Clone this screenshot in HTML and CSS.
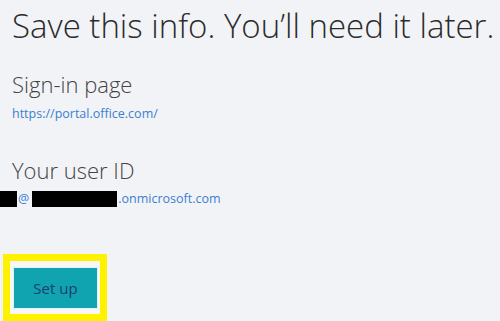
FILE: index.html
```html
<!DOCTYPE html>
<html>
<head>
  <title>Save this info</title>
  <link rel="stylesheet" href="styles.css">
</head>
<body>
  <div class="container">
    <h1>Save this info. You’ll need it later.</h1>

    <div class="info">
      <h2>Sign-in page</h2>
      <a class="link" href="#">https://portal.office.com/</a>
    </div>

    <div class="info">
      <h2>Your user ID</h2>
      <div class="user-id">
        <span class="redact redact-short"></span><span class="link">@</span><span class="redact redact-long"></span><span class="link">.onmicrosoft.com</span>
      </div>
    </div>

    <div class="highlight">
      <button class="setup">Set up</button>
    </div>
  </div>
</body>
</html>
```

FILE: styles.css
```css
body {
  margin: 0;
  background-color: #f2f3f6;
  font-family: "Open Sans", sans-serif;
  color: #333;
}

.container {
  display: flex;
  flex-direction: column;
  align-items: flex-start;
  padding: 4px 0 0 12px;
  height: 317px;
  overflow: hidden;
}

h1 {
  margin: 0;
  font-size: 33px;
  font-weight: 300;
  line-height: 44px;
  color: #2b2b2b;
  white-space: nowrap;
}

.info {
  display: flex;
  flex-direction: column;
  align-items: flex-start;
  margin-top: 21px;
}

.info + .info {
  margin-top: 31px;
}

h2 {
  margin: 0;
  font-size: 22px;
  font-weight: 300;
  line-height: 30px;
  color: #444;
}

.link {
  font-size: 12.5px;
  line-height: 20px;
  color: #3a7fd0;
  text-decoration: none;
}

.info > .link {
  margin-top: 5px;
}

.user-id {
  display: flex;
  align-items: center;
  margin: 4px 0 0 -12px;
  height: 20px;
}

.redact {
  display: inline-block;
  height: 16px;
  background-color: #000;
}

.redact-short {
  width: 17px;
  margin-right: 1px;
}

.redact-long {
  width: 85px;
  margin-left: 3px;
  margin-right: 1px;
}

.highlight {
  flex-shrink: 0;
  margin: 45px 0 0 -9px;
  padding: 6px 2px 5px 3px;
  border: 7px solid #fff200;
  background-color: #f7f7f8;
}

.setup {
  display: block;
  width: 85px;
  height: 42px;
  border: 1px solid #e3f1f3;
  background-color: #10a3b0;
  color: #1d3f6e;
  font-family: "Open Sans", sans-serif;
  font-size: 15px;
}
```
